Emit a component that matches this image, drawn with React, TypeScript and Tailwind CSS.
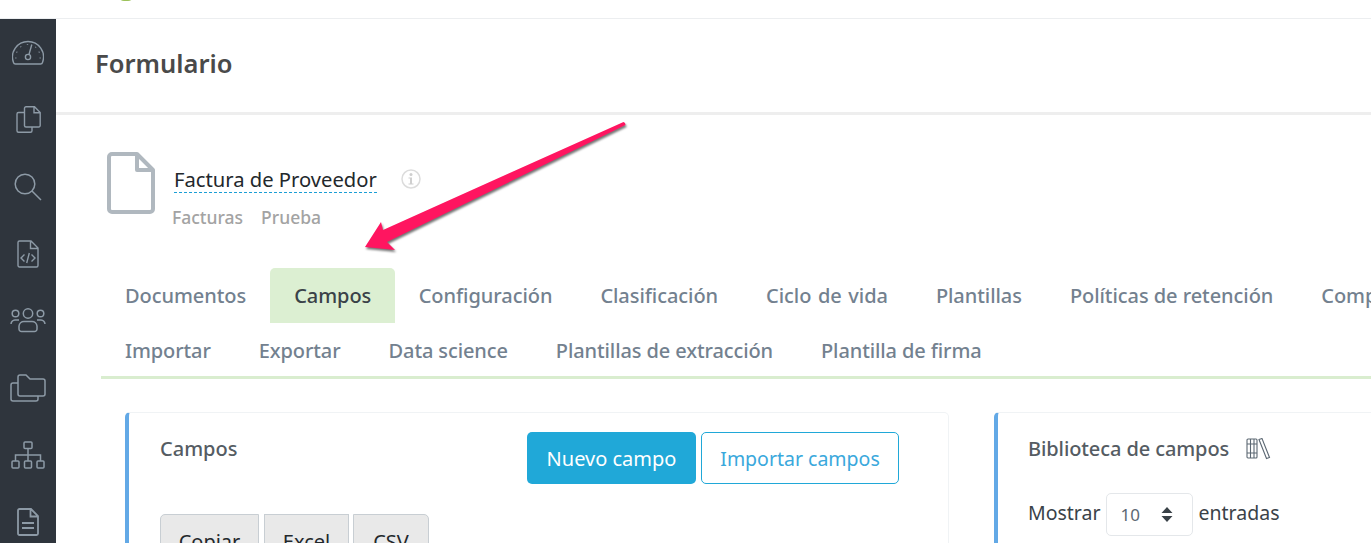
import React from "react";

const tabsRowOne = [
  { label: "Documentos" },
  { label: "Campos", active: true },
  { label: "Configuración" },
  { label: "Clasificación" },
  { label: "Ciclo de vida", wide: true },
  { label: "Plantillas" },
  { label: "Políticas de retención" },
  { label: "Compartir" },
];
const tabsRowTwo = ["Importar", "Exportar", "Data science", "Plantillas de extracción", "Plantilla de firma"];

const iconCls = "fill-none stroke-[#8d9aa6]";

const NavItem = ({ children }: { children: React.ReactNode }) => (
  <div className="h-[67px] shrink-0 flex items-center justify-center">{children}</div>
);

const Sidebar = () => (
  <div className="w-[56px] shrink-0 bg-[#2f353d] flex flex-col overflow-hidden h-[524px]">
    <NavItem>
      <svg width="32" height="25" viewBox="0 0 32 25" className={iconCls} strokeWidth="1.4">
        <path d="M3.500 24h25a2 2 0 0 0 2-1.500A15.500 15.500 0 1 0 1.500 22.500 2 2 0 0 0 3.500 24z" />
        <circle cx="16" cy="17" r="2.600" />
        <path d="M17 14.500l2.800-10M15.500 4v.8M8.500 6.500l.6.6M4.500 12l.8.3M3.500 18h.8M24 7l-.6.6M27.500 12l-.8.3M28.500 18h-.8" />
      </svg>
    </NavItem>
    <NavItem>
      <svg width="25" height="27" viewBox="0 0 25 27" className={iconCls} strokeWidth="1.4">
        <path d="M8.500 20V2.300A1.500 1.500 0 0 1 10 .8h8.500l5.700 5.700v13a1.500 1.500 0 0 1-1.500 1.500H10a1.500 1.500 0 0 1-1.500-1.500zM18 .8v6h6.200" />
        <path d="M8.500 6.500H2.500A1.500 1.500 0 0 0 1 8v16.700a1.500 1.500 0 0 0 1.500 1.500h12a1.500 1.500 0 0 0 1.500-1.500V21" />
      </svg>
    </NavItem>
    <NavItem>
      <svg width="28" height="28" viewBox="0 0 28 28" className={iconCls} strokeWidth="1.500">
        <circle cx="11" cy="11" r="9.800" />
        <path d="M18 18l9 9" />
      </svg>
    </NavItem>
    <NavItem>
      <svg width="22" height="28" viewBox="0 0 22 28" className={iconCls} strokeWidth="1.400">
        <path d="M2.500 1h11.500l7 7v17.500a1.500 1.500 0 0 1-1.500 1.500h-17a1.500 1.500 0 0 1-1.500-1.500v-23A1.500 1.500 0 0 1 2.500 1zM13.500 1v7.500h7.500" />
        <path d="M7.500 14.500l-3.500 3.500 3.500 3.500M14.500 14.500l3.500 3.500-3.500 3.500M12.300 13l-2.600 10" />
      </svg>
    </NavItem>
    <NavItem>
      <svg width="36" height="25" viewBox="0 0 36 25" className={iconCls} strokeWidth="1.500">
        <circle cx="18" cy="5.500" r="4.700" />
        <circle cx="5.500" cy="5.500" r="3.300" />
        <circle cx="30.500" cy="5.500" r="3.300" />
        <path d="M9 21v-3a5 5 0 0 1 5-4.500h8a5 5 0 0 1 5 4.500v3a2.500 2.500 0 0 1-2.500 2.500h-13A2.500 2.500 0 0 1 9 21z" />
        <path d="M1 16a4.500 4.500 0 0 1 4-4h4M35 16a4.500 4.500 0 0 0-4-4h-4" />
      </svg>
    </NavItem>
    <NavItem>
      <svg width="36" height="28" viewBox="0 0 36 28" className={iconCls} strokeWidth="1.500">
        <path d="M8 9V3a2 2 0 0 1 2-2h6l4 4h13a2 2 0 0 1 2 2v13a2 2 0 0 1-2 2H10a2 2 0 0 1-2-2V9z" />
        <path d="M8 9H3a2 2 0 0 0-2 2v14a2 2 0 0 0 2 2h23a2 2 0 0 0 2-2v-3" />
      </svg>
    </NavItem>
    <NavItem>
      <svg width="34" height="28" viewBox="0 0 34 28" className={iconCls} strokeWidth="1.500">
        <rect x="13" y="1" width="8" height="6.500" rx="1" />
        <rect x="1" y="20" width="7" height="7" rx="1" />
        <rect x="13.500" y="20" width="7" height="7" rx="1" />
        <rect x="26" y="20" width="7" height="7" rx="1" />
        <path d="M17 7.500V20M4.500 20v-6h25v6" />
      </svg>
    </NavItem>
    <NavItem>
      <svg width="22" height="28" viewBox="0 0 22 28" className="fill-none stroke-[#8d9aa6]" strokeWidth="1.800">
        <path d="M2.500 1h11.500l7 7v17.500a1.500 1.500 0 0 1-1.500 1.500h-17a1.500 1.500 0 0 1-1.500-1.500v-23A1.500 1.500 0 0 1 2.500 1zM13.500 1v7.500h7.500" />
        <path d="M5 15h12M5 20h12" strokeWidth="2" />
      </svg>
    </NavItem>
  </div>
);

const Arrow = () => (
  <svg
    className="absolute left-[355px] top-[115px] drop-shadow-[1px_2px_1px_rgba(0,0,0,0.55)]"
    width="280"
    height="145"
    viewBox="0 0 280 145"
  >
    <path d="M270 8L268.500 7 28 115 26 107 10 132 40 135 32 127 270.500 10z" fill="#ff1560" />
  </svg>
);

const Select = () => (
  <div className="w-[87px] h-[43px] ml-[5px] mr-[6px] border border-[#e4e7ea] rounded-[5px] flex items-center justify-between pl-[14px] pr-[19px] text-[#5c6873]">
    <span className="text-[17px]">10</span>
    <svg width="12" height="15" viewBox="0 0 12 15" className="fill-[#3a4248]">
      <path d="M6 0l5.500 6H.5zM6 15L.5 9h11z" />
    </svg>
  </div>
);

export default function App() {
  return (
    <div
      className="w-[1371px] h-[543px] overflow-hidden bg-white relative text-[#23282c]"
      style={{ fontFamily: '"Noto Sans", sans-serif' }}
    >
      <div className="h-[19px] border-b border-[#eceef0] relative">
        <div className="absolute left-[118px] -top-[5px] w-[16px] h-[6px] rounded-b-full bg-[#9cc25a]" />
      </div>
      <div className="flex">
        <Sidebar />
        <div className="flex-1 min-w-0">
          <div className="h-[96px] border-b-[3px] border-[#eeeeee] flex items-center pl-[39px] pb-[4px]">
            <h1 className="text-[25.500px] font-semibold text-[#4a4a4a] leading-none">Formulario</h1>
          </div>
          <div className="flex pl-[51px] pt-[37px] h-[152px]">
            <svg width="48" height="63" viewBox="0 0 48 63" className="fill-none stroke-[#b0b8bf]" strokeWidth="4">
              <path d="M5 2h25l16 16v39a3 3 0 0 1-3 3H5a3 3 0 0 1-3-3V5a3 3 0 0 1 3-3zM30 2v16h16" strokeLinejoin="round" />
            </svg>
            <div className="ml-[17px] pt-[14px]">
              <div className="flex items-start">
                <div className="text-[20.200px] leading-[26px] text-[#23282c] border-b-[1.5px] border-dashed border-b-[#1b9fd6] ml-[2px]">
                  Factura de Proveedor
                </div>
                <svg width="20" height="20" viewBox="0 0 20 20" className="ml-[24px] mt-[3px]">
                  <circle cx="10" cy="10" r="9" fill="none" stroke="#dcdcdc" strokeWidth="1.500" />
                  <circle cx="10" cy="5.500" r="1.500" fill="#cfcfcf" />
                  <path d="M7.500 8.500h3.500v6h1.500v1h-5v-1h1.500v-5h-1.500z" fill="#cfcfcf" />
                </svg>
              </div>
              <div className="flex gap-[18px] mt-[13px] text-[17.500px] leading-[22px] text-[#a3a3a3] font-medium">
                <span>Facturas</span>
                <span>Prueba</span>
              </div>
            </div>
          </div>
          <div className="ml-[45px] border-b-[3px] border-[#d9edcf] h-[112px] pt-[1px]">
            <div className="flex whitespace-nowrap overflow-hidden text-[20px] font-medium text-[#73818f] tracking-[-0.06px]">
              {tabsRowOne.map((t) => (
                <div
                  key={t.label}
                  className={
                    t.active
                      ? "h-[55px] px-[24px] -mr-[0.5px] pt-[1px] flex items-center bg-[#dcefd2] rounded-t-[5px] text-[#3a4248]"
                      : t.wide
                        ? "h-[55px] px-[24px] pt-[1px] flex items-center [word-spacing:1.5px]"
                        : "h-[55px] px-[24px] pt-[1px] flex items-center"
                  }
                >
                  {t.label}
                </div>
              ))}
            </div>
            <div className="flex whitespace-nowrap text-[20px] font-medium text-[#73818f] tracking-[-0.11px]">
              {tabsRowTwo.map((t) => (
                <div key={t} className="h-[54px] px-[24px] pt-[2px] flex items-center">
                  {t}
                </div>
              ))}
            </div>
          </div>
          <div className="flex pl-[69px] pt-[33px] gap-[45px]">
            <div className="w-[824px] h-[200px] shrink-0 border border-[#f0f3f5] border-l-[4px] border-l-[#63a9e6] rounded-[5px] pl-[31px] pr-[49px] pt-[19px]">
              <div className="flex justify-between items-start">
                <div className="text-[20px] font-medium text-[#555c63] leading-[34px]">Campos</div>
                <div className="flex gap-[5px]">
                  <button className="h-[52px] w-[169px] pt-[1px] bg-[#20a8d8] rounded-[5px] text-white text-[20px]">Nuevo campo</button>
                  <button className="h-[52px] w-[198px] pt-[1px] border border-[#20a8d8] rounded-[5px] text-[#3aa8dc] text-[19.500px]">Importar campos</button>
                </div>
              </div>
              <div className="flex mt-[30px] text-[#23282c] text-[20px]">
                <div className="w-[99px] h-[50px] bg-[#e9e9e9] border border-[#c8ced3] rounded-l-[5px] text-center pt-[12px]">Copiar</div>
                <div className="w-[85px] h-[50px] ml-[5px] bg-[#e9e9e9] border border-[#c8ced3] text-center pt-[12px]">Excel</div>
                <div className="w-[76px] h-[50px] ml-[4px] bg-[#e9e9e9] border border-[#c8ced3] rounded-r-[5px] text-center pt-[12px]">CSV</div>
              </div>
            </div>
            <div className="flex-1 h-[200px] border border-r-0 border-[#f0f3f5] border-l-[4px] border-l-[#63a9e6] rounded-l-[5px] pl-[30px] pt-[19px]">
              <div className="flex items-center text-[20px] font-medium text-[#555c63] leading-[34px] tracking-[-0.1px]">
                Biblioteca de campos
                <svg width="25" height="22" viewBox="0 0 25 22" className="ml-[17px] fill-none stroke-[#5c6873]" strokeWidth="1.100">
                  <rect x="1" y="1" width="10" height="19" rx="1" />
                  <path d="M4.500 1v19M8 1v19M1 6h10M1 15h10M13 1.500l3-1 7.500 19-3 1z" />
                </svg>
              </div>
              <div className="flex items-center mt-[27px] text-[19.500px] text-[#3a4248]">
                <span className="mb-[4px]">Mostrar</span>
                <Select />
                <span className="mb-[4px]">entradas</span>
              </div>
            </div>
          </div>
        </div>
      </div>
      <Arrow />
    </div>
  );
}
